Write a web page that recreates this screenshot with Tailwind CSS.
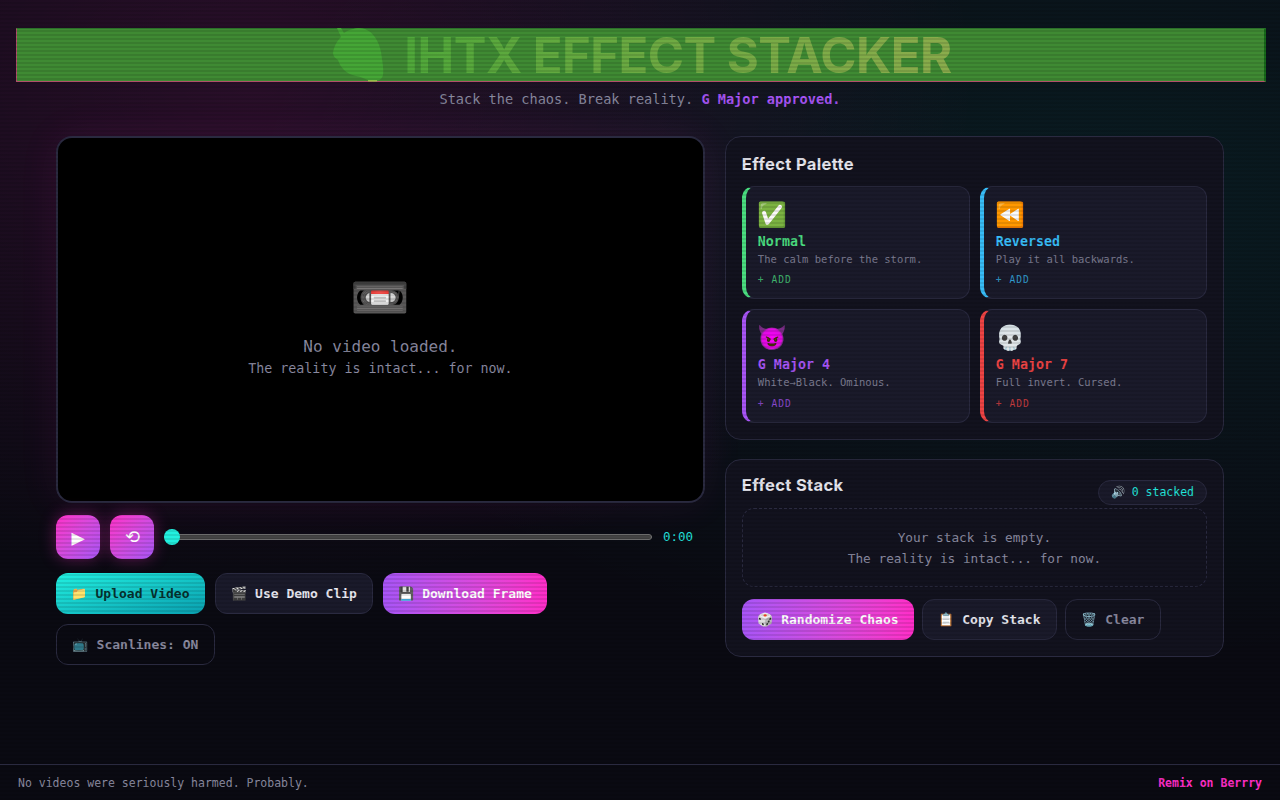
<!DOCTYPE html>
<html lang="en">
<head>
    <title>IHTX Effect Stacker</title>
    <meta charset="UTF-8" />
    <script src="https://cdn.jsdelivr.net/npm/@tailwindcss/browser@4"></script>
</head>
<body class="h-screen overflow-hidden bg-[#0a0a12] font-['DejaVu_Sans_Mono','Noto_Color_Emoji',monospace] text-[#e8e8f0]">
<div class="relative flex h-[800px] flex-col bg-[radial-gradient(ellipse_at_20%_10%,rgba(255,45,200,0.13),transparent_50%),radial-gradient(ellipse_at_85%_25%,rgba(0,240,220,0.08),transparent_55%)]">

    <header class="px-4 pt-7 text-center">
        <div class="flex h-[54px] w-[1250px] items-center justify-center gap-[19px] border-t border-r-2 border-b border-l border-t-[#2a6f2a] border-r-[#176a1a] border-b-[#b0506a] border-l-[#b0506a] bg-[#3f8a33]">
            <svg width="52" height="54" viewBox="0 0 52 54" class="ml-1 shrink-0">
                <path d="M4 0 L8 0 L11 5 C16 1 26 -1 32 1 C40 4 46 13 48 24 C49 32 51 40 50 47 C49 52 44 54 38 53 C34 52 29 49 23 48 C13 46 7 39 5 32 C2 30 0 28 0 25 C1 18 4 13 8 9 Z" fill="#45a636" />
                <rect x="35" y="52" width="9" height="1.5" fill="#8fbf45" />
            </svg>
            <h1 class="font-['Inter',sans-serif] text-[49px] leading-none font-bold tracking-[-0.5px] text-transparent bg-linear-to-r from-[#4fa83a] to-[#8aac4c] bg-clip-text">IHTX EFFECT STACKER</h1>
        </div>
        <p class="mt-[7px] text-[13.6px] leading-5 text-[#8a8aa0]">Stack the chaos. Break reality. <span class="font-bold text-[#a855f7]">G Major approved.</span></p>
    </header>

    <main class="mt-[27px] grid grid-cols-[1.3fr_1fr] items-start gap-5 px-14">
        <section>
            <div class="flex h-[367px] flex-col items-center justify-center rounded-2xl border-2 border-[#2a2a40] bg-black text-center shadow-[0_0_40px_rgba(255,45,200,0.08)]">
                <div class="text-[48px] leading-[72px]">📼</div>
                <p class="mt-[2px] text-base leading-6 text-[#8a8aa0]">No video loaded.</p>
                <p class="text-[13.3px] leading-5 text-[#8a8aa0]">The reality is intact... for now.</p>
            </div>

            <div class="mt-3 flex items-center gap-[10px]">
                <button class="h-11 w-11 rounded-xl bg-linear-to-br from-[#ff2dc8] to-[#a855f7] text-[22px] text-white shadow-[0_0_16px_rgba(255,45,200,0.35)]">▶</button>
                <button class="h-11 w-11 rounded-xl bg-linear-to-br from-[#ff2dc8] to-[#a855f7] text-lg text-white shadow-[0_0_16px_rgba(255,45,200,0.35)]">⟲</button>
                <div class="relative h-[6px] w-[488px] rounded-full border border-[#777] bg-[#444]">
                    <span class="absolute top-[-6px] left-[-1px] h-4 w-4 rounded-full bg-[#22f0e0]"></span>
                </div>
                <span class="ml-[1px] text-[12.5px] text-[#22e0dc]">0:00</span>
            </div>

            <div class="mt-[14px] flex flex-wrap gap-[10px]">
                <button class="h-[41px] w-[149px] rounded-xl bg-linear-to-br from-[#22f0e0] to-[#0aa0b0] text-[13px] font-bold text-[#06302e]">📁 Upload Video</button>
                <button class="h-[41px] w-[158px] rounded-xl border border-[#2a2a40] bg-[#1a1a2a] text-[13px] font-bold text-[#e8e8f0]">🎬 Use Demo Clip</button>
                <button class="h-[41px] w-[164px] rounded-xl bg-linear-to-r from-[#a855f7] to-[#ff2dc8] text-[13px] font-bold text-white">💾 Download Frame</button>
                <button class="h-[41px] w-[159px] rounded-xl border border-[#2a2a40] text-[13px] font-bold text-[#8a8aa0]">📺 Scanlines: ON</button>
            </div>
        </section>

        <section class="flex flex-col gap-[19px]">
            <div class="rounded-2xl border border-[#2a2a40] bg-[#12121e] px-4 pt-4 pb-4">
                <h2 class="font-['Inter',sans-serif] text-[16.5px] leading-[22px] font-bold tracking-[0.35px]">Effect Palette</h2>
                <div class="mt-[11px] grid grid-cols-[228px_227px] gap-x-[10px] gap-y-[10px]">
                    <div class="h-[113px] rounded-xl border border-l-4 border-[#2a2a40] border-l-[#4ade80] bg-[#1a1a2a] px-3 pt-3">
                        <div class="text-[24px] leading-[32px]">✅</div>
                        <div class="mt-[2px] text-[13.3px] leading-[18px] font-bold text-[#4ade80]">Normal</div>
                        <div class="text-[10.5px] leading-[16px] text-[#7a7a90]">The calm before the storm.</div>
                        <div class="mt-[5px] text-[9.6px] leading-[16px] tracking-[1px] text-[#4ade80]/80">+ ADD</div>
                    </div>
                    <div class="h-[113px] rounded-xl border border-l-4 border-[#2a2a40] border-l-[#38bdf8] bg-[#1a1a2a] px-3 pt-3">
                        <div class="text-[24px] leading-[32px]">⏪</div>
                        <div class="mt-[2px] text-[13.3px] leading-[18px] font-bold text-[#38bdf8]">Reversed</div>
                        <div class="text-[10.5px] leading-[16px] text-[#7a7a90]">Play it all backwards.</div>
                        <div class="mt-[5px] text-[9.6px] leading-[16px] tracking-[1px] text-[#38bdf8]/80">+ ADD</div>
                    </div>
                    <div class="h-[114px] rounded-xl border border-l-4 border-[#2a2a40] border-l-[#a855f7] bg-[#1a1a2a] px-3 pt-3">
                        <div class="text-[24px] leading-[32px]">😈</div>
                        <div class="mt-[2px] text-[13.3px] leading-[18px] font-bold text-[#a855f7]">G Major 4</div>
                        <div class="text-[10.5px] leading-[16px] text-[#7a7a90]">White→Black. Ominous.</div>
                        <div class="mt-[6px] text-[9.6px] leading-[16px] tracking-[1px] text-[#a855f7]/80">+ ADD</div>
                    </div>
                    <div class="h-[114px] rounded-xl border border-l-4 border-[#2a2a40] border-l-[#ef4444] bg-[#1a1a2a] px-3 pt-3">
                        <div class="text-[24px] leading-[32px]">💀</div>
                        <div class="mt-[2px] text-[13.3px] leading-[18px] font-bold text-[#ef4444]">G Major 7</div>
                        <div class="text-[10.5px] leading-[16px] text-[#7a7a90]">Full invert. Cursed.</div>
                        <div class="mt-[6px] text-[9.6px] leading-[16px] tracking-[1px] text-[#ef4444]/80">+ ADD</div>
                    </div>
                </div>
            </div>

            <div class="rounded-2xl border border-[#2a2a40] bg-[#12121e] px-4 pt-4 pb-4">
                <div class="flex items-start justify-between">
                    <h2 class="-mt-[1px] font-['Inter',sans-serif] text-[16.5px] leading-[20px] font-bold tracking-[0.35px]">Effect Stack</h2>
                    <span class="mt-[4px] flex h-[25px] items-center gap-[6px] rounded-full border border-[#2a2a40] bg-[#1a1a2a] px-3 text-[11.5px] text-[#22e6dc]"><span>🔊</span>0 stacked</span>
                </div>
                <div class="mt-[3px] flex h-[79px] flex-col items-center justify-center rounded-xl border border-dashed border-[#2a2a40] text-[12.75px] leading-[21px] text-[#8a8aa0]">
                    <p>Your stack is empty.</p>
                    <p>The reality is intact... for now.</p>
                </div>
                <div class="mt-3 flex gap-2">
                    <button class="h-[41px] w-[172px] rounded-xl bg-linear-to-r from-[#a855f7] to-[#ff2dc8] text-[13px] font-bold text-white">🎲 Randomize Chaos</button>
                    <button class="h-[41px] w-[135px] rounded-xl border border-[#2a2a40] bg-[#1a1a2a] text-[13px] font-bold text-[#e8e8f0]">📋 Copy Stack</button>
                    <button class="h-[41px] w-[96px] rounded-xl border border-[#2a2a40] text-[13px] font-bold text-[#8a8aa0]">🗑️ Clear</button>
                </div>
            </div>
        </section>
    </main>

    <footer class="mt-auto flex h-9 items-center justify-between border-t border-[#2a2a40] bg-[#0a0a12] px-[18px] pt-[2px] text-[11.5px]">
        <span class="text-[#8a8aa0]">No videos were seriously harmed. Probably.</span>
        <span class="font-bold text-[#ff2dc8]">Remix on Berrry</span>
    </footer>

    <div class="pointer-events-none absolute inset-0 bg-[repeating-linear-gradient(0deg,rgba(0,0,0,0.1)_0px,rgba(0,0,0,0.1)_2px,transparent_2px,transparent_4px)]"></div>
</div>
</body>
</html>
